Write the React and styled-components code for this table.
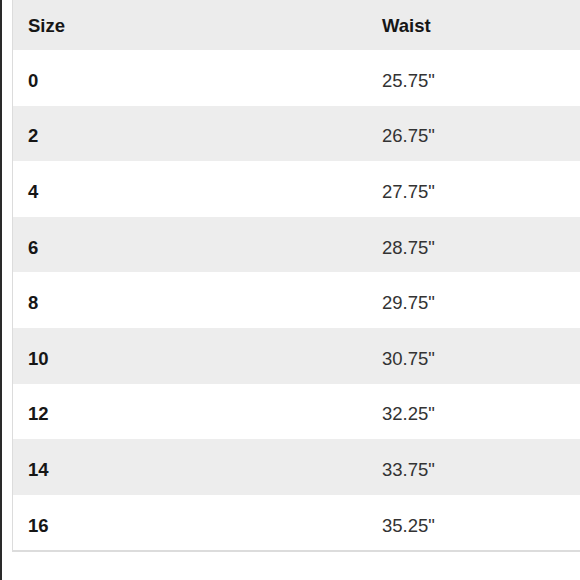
import React from "react";
import styled, { createGlobalStyle } from "styled-components";

const GlobalStyle = createGlobalStyle`
  html, body {
    margin: 0;
    padding: 0;
    background: #fff;
  }
  body {
    font-family: "Liberation Sans", Arial, sans-serif;
  }
`;

const sizes = [
  ["0", '25.75"'],
  ["2", '26.75"'],
  ["4", '27.75"'],
  ["6", '28.75"'],
  ["8", '29.75"'],
  ["10", '30.75"'],
  ["12", '32.25"'],
  ["14", '33.75"'],
  ["16", '35.25"'],
];

const Page = () => {
  return (
    <PageWrapper>
      <GlobalStyle />
      <EdgeLine />
      <TableArea>
        <Table>
          <HeaderRow>
            <Cell $bold>Size</Cell>
            <Cell $bold>Waist</Cell>
          </HeaderRow>
          {sizes.map(([size, waist], i) => (
            <Row key={size} $shaded={i % 2 === 1}>
              <Cell $bold>{size}</Cell>
              <Cell>{waist}</Cell>
            </Row>
          ))}
        </Table>
      </TableArea>
    </PageWrapper>
  );
};

const PageWrapper = styled.div`
  display: flex;
  width: 580px;
  height: 580px;
  overflow: hidden;
`;

const EdgeLine = styled.div`
  flex: 0 0 2px;
  background: #2a2a2a;
`;

const TableArea = styled.div`
  flex: 1;
  padding-left: 10px;
`;

const Table = styled.div`
  width: 620px;
  border: 1px solid #dcdcdc;
  border-top: none;
  border-bottom-width: 2px;
`;

const HeaderRow = styled.div`
  display: grid;
  grid-template-columns: 354px 1fr;
  align-items: center;
  height: 50px;
  padding-top: 1px;
  box-sizing: border-box;
  background: #ececec;
`;

const Row = styled.div`
  display: grid;
  grid-template-columns: 354px 1fr;
  align-items: center;
  height: 55.6px;
  padding-top: 6px;
  box-sizing: border-box;
  background: ${(p) => (p.$shaded ? "#ededed" : "#fff")};
`;

const Cell = styled.div`
  padding-left: 15px;
  font-size: 18.5px;
  font-weight: ${(p) => (p.$bold ? 700 : 400)};
  color: ${(p) => (p.$bold ? "#161616" : "#333")};
`;

export default Page;
